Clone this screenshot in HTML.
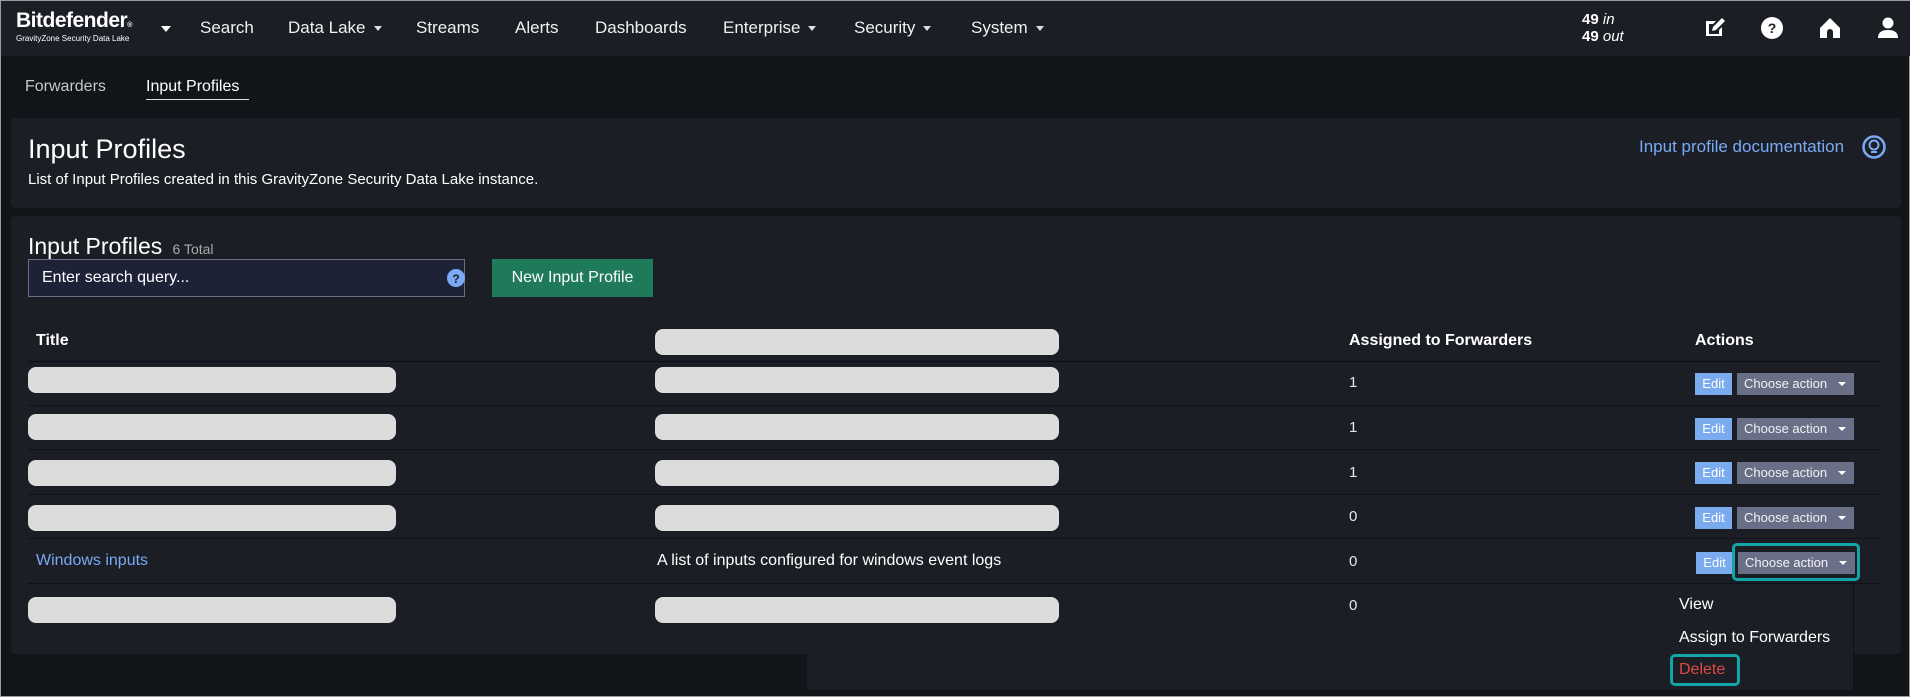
<!DOCTYPE html>
<html><head><meta charset="utf-8"><style>
*{box-sizing:border-box;margin:0;padding:0}
body{width:1910px;height:697px;background:#111419;font-family:"Liberation Sans",sans-serif;color:#e8e8ea;position:relative;overflow:hidden;border:1px solid #9a9a9a}
.a{position:absolute;white-space:nowrap}
.nav{position:absolute;left:0;top:0;width:1910px;height:55px;background:#1b1e25}
.ni{position:absolute;top:17px;font-size:17px;color:#f0f0f0}
.car{display:inline-block;width:0;height:0;border-left:4px solid transparent;border-right:4px solid transparent;border-top:5px solid #ddd;margin-left:8px;vertical-align:middle}
.panel{position:absolute;left:10px;width:1890px;background:#1b1e25;border-radius:4px}
.pill{position:absolute;height:26px;background:#dcdcdc;border-radius:8px}
.hr{position:absolute;left:27px;width:1853px;height:1px;background:#0f1218}
.num{position:absolute;left:1348px;font-size:15px}
.edit{position:absolute;left:1694px;width:37px;height:22px;background:#7aabee;color:#fff;font-size:13px;text-align:center;line-height:22px}
.ch{position:absolute;left:1736px;width:117px;height:22px;background:#6a6f88;color:#f2f2f2;font-size:13px;line-height:22px;padding-left:7px}
.ch:after{content:"";position:absolute;right:8px;top:9px;border-left:4px solid transparent;border-right:4px solid transparent;border-top:4px solid #fff}
</style></head><body>
<div class="nav">
 <div class="a" style="left:15px;top:8px;font-size:21px;font-weight:bold;color:#fff;letter-spacing:-0.5px">Bitdefender<span style="font-size:7px">®</span></div>
 <div class="a" style="left:15px;top:33px;font-size:8px;color:#fff">GravityZone Security Data Lake</div>
 <div class="a" style="left:160px;top:25px;border-left:5px solid transparent;border-right:5px solid transparent;border-top:6px solid #fff"></div>
 <div class="ni" style="left:199px">Search</div>
 <div class="ni" style="left:287px">Data Lake<span class="car"></span></div>
 <div class="ni" style="left:415px">Streams</div>
 <div class="ni" style="left:514px">Alerts</div>
 <div class="ni" style="left:594px">Dashboards</div>
 <div class="ni" style="left:722px">Enterprise<span class="car"></span></div>
 <div class="ni" style="left:853px">Security<span class="car"></span></div>
 <div class="ni" style="left:970px">System<span class="car"></span></div>
 <div class="a" style="left:1581px;top:10px;font-size:15px;font-weight:bold;line-height:17px;color:#fff">49 <i style="font-weight:normal">in</i><br>49 <i style="font-weight:normal">out</i></div>
 <svg class="a" style="left:1702px;top:15px" width="24" height="24" viewBox="0 0 24 24"><path d="M3 5h10l-3 3H6v10h10v-4l3-3v9H3z" fill="#fff"/><path d="M9 15l1-4 9-9 3 3-9 9z" fill="#fff"/></svg>
 <svg class="a" style="left:1760px;top:16px" width="22" height="22"><circle cx="11" cy="11" r="11" fill="#fff"/><text x="11" y="16" text-anchor="middle" font-size="14" font-weight="bold" fill="#1b1e25" font-family="Liberation Sans">?</text></svg>
 <svg class="a" style="left:1818px;top:16px" width="22" height="22"><path d="M11 1L1 11v10h7v-6a3 3 0 0 1 6 0v6h7V11z" fill="#fff"/></svg>
 <svg class="a" style="left:1876px;top:16px" width="22" height="22"><circle cx="11" cy="6" r="5.5" fill="#fff"/><path d="M1 21c0-6 4-8 10-8s10 2 10 8z" fill="#fff"/></svg>
</div>
<div class="a" style="left:24px;top:77px;font-size:16px;color:#c8c8cc">Forwarders</div>
<div class="a" style="left:145px;top:77px;font-size:16px;color:#fff">Input Profiles</div>
<div class="a" style="left:145px;top:98px;width:103px;height:1px;background:#ddd"></div>

<div class="panel" style="top:117px;height:90px">
 <div class="a" style="left:17px;top:16px;font-size:27px;color:#fff">Input Profiles</div>
 <div class="a" style="left:17px;top:53px;font-size:15px;color:#fff">List of Input Profiles created in this GravityZone Security Data Lake instance.</div>
 <div class="a" style="left:1628px;top:19px;font-size:17px;color:#7aaaf5">Input profile documentation</div>
 <svg class="a" style="left:1851px;top:17px" width="24" height="24"><circle cx="12" cy="12" r="10.5" fill="none" stroke="#7aaaf5" stroke-width="2.5"/><circle cx="12" cy="10" r="4.5" fill="none" stroke="#7aaaf5" stroke-width="2"/><path d="M9 17h6" stroke="#7aaaf5" stroke-width="2"/></svg>
</div>

<div class="panel" style="top:215px;height:438px"></div>
<div class="a" style="left:806px;top:583px;width:1047px;height:106px;background:#1b1e25;border-right:1px solid #0f1218"></div>
<div class="a" style="left:27px;top:232px;font-size:23px;color:#fff">Input Profiles <span style="font-size:14px;color:#aaa">&nbsp;6 Total</span></div>
<div class="a" style="left:27px;top:258px;width:437px;height:38px;background:#1e2237;border:1px solid #6a6d85"></div>
<div class="a" style="left:41px;top:268px;font-size:16px;color:#fff">Enter search query...</div>
<svg class="a" style="left:446px;top:268px" width="18" height="18"><circle cx="9" cy="9" r="9" fill="#7aaaf5"/><text x="9" y="14" text-anchor="middle" font-size="12" font-weight="bold" fill="#1b1e25" font-family="Liberation Sans">?</text></svg>
<div class="a" style="left:491px;top:258px;width:161px;height:38px;background:#1f7a5a;color:#fff;font-size:16px;line-height:38px;text-align:center">New Input Profile</div>

<div class="a" style="left:35px;top:331px;font-size:16px;font-weight:bold;color:#fff">Title</div>
<div class="pill" style="left:654px;top:328px;width:404px"></div>
<div class="a" style="left:1348px;top:331px;font-size:16px;font-weight:bold;color:#fff">Assigned to Forwarders</div>
<div class="a" style="left:1694px;top:331px;font-size:16px;font-weight:bold;color:#fff">Actions</div>
<div class="hr" style="top:360px;background:#0b0e1a"></div>
<div class="hr" style="top:404px"></div><div class="hr" style="top:448px"></div><div class="hr" style="top:493px"></div><div class="hr" style="top:537px"></div><div class="hr" style="top:582px"></div>

<div class="pill" style="left:27px;top:366px;width:368px"></div><div class="pill" style="left:654px;top:366px;width:404px"></div>
<div class="num" style="top:373px">1</div><div class="edit" style="top:372px">Edit</div><div class="ch" style="top:372px">Choose action</div>
<div class="pill" style="left:27px;top:413px;width:368px"></div><div class="pill" style="left:654px;top:413px;width:404px"></div>
<div class="num" style="top:418px">1</div><div class="edit" style="top:417px">Edit</div><div class="ch" style="top:417px">Choose action</div>
<div class="pill" style="left:27px;top:459px;width:368px"></div><div class="pill" style="left:654px;top:459px;width:404px"></div>
<div class="num" style="top:463px">1</div><div class="edit" style="top:461px">Edit</div><div class="ch" style="top:461px">Choose action</div>
<div class="pill" style="left:27px;top:504px;width:368px"></div><div class="pill" style="left:654px;top:504px;width:404px"></div>
<div class="num" style="top:507px">0</div><div class="edit" style="top:506px">Edit</div><div class="ch" style="top:506px">Choose action</div>
<div class="a" style="left:35px;top:551px;font-size:16px;color:#7aaaf5">Windows inputs</div>
<div class="a" style="left:656px;top:551px;font-size:16px;color:#fff">A list of inputs configured for windows event logs</div>
<div class="num" style="top:552px">0</div><div class="edit" style="top:551px;left:1695px">Edit</div><div class="ch" style="top:551px;left:1737px">Choose action</div>
<div class="a" style="left:1731px;top:542px;width:128px;height:38px;border:3px solid #12a6a6;border-radius:5px"></div>
<div class="pill" style="left:27px;top:596px;width:368px"></div><div class="pill" style="left:654px;top:596px;width:404px"></div>
<div class="num" style="top:596px">0</div>

<div class="a" style="left:1678px;top:595px;font-size:16px;color:#fff">View</div>
<div class="a" style="left:1678px;top:628px;font-size:16px;color:#fff">Assign to Forwarders</div>
<div class="a" style="left:1669px;top:653px;width:70px;height:32px;border:3px solid #12a6a6;border-radius:5px"></div>
<div class="a" style="left:1678px;top:660px;font-size:16px;color:#e04848">Delete</div>
</body></html>
